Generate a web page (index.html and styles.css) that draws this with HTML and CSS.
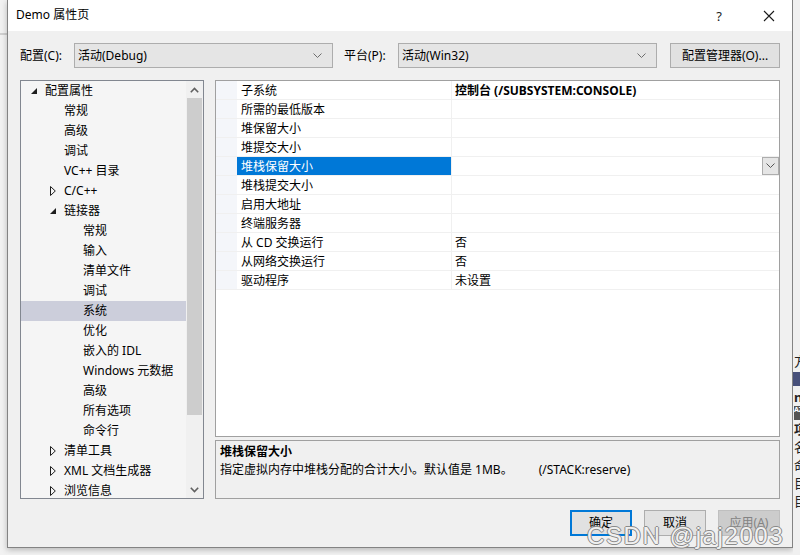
FILE: index.html
```html
<!DOCTYPE html>
<html lang="zh-CN">
<head>
<meta charset="utf-8">
<title>Demo 属性页</title>
<link rel="stylesheet" href="styles.css">
</head>
<body>
<div class="desk">
  <div class="left-gap"><div class="bg-line"></div></div>
  <div class="dialog">
    <div class="titlebar">
      <span class="title">Demo 属性页</span>
      <span class="help">?</span>
      <span class="close"><svg width="12" height="12" viewBox="0 0 12 12"><path d="M1 1 L11 11 M11 1 L1 11" stroke="#1a1a1a" stroke-width="1.1" fill="none"/></svg></span>
    </div>
    <div class="content">
      <div class="toprow">
        <span class="lbl">配置(C):</span>
        <div class="combo"><span>活动(Debug)</span><svg class="chev" width="9" height="6" viewBox="0 0 9 6"><path d="M0.5 0.5 L4.5 4.5 L8.5 0.5" stroke="#6d6d6d" fill="none"/></svg></div>
        <span class="lbl lbl2">平台(P):</span>
        <div class="combo"><span>活动(Win32)</span><svg class="chev" width="9" height="6" viewBox="0 0 9 6"><path d="M0.5 0.5 L4.5 4.5 L8.5 0.5" stroke="#6d6d6d" fill="none"/></svg></div>
        <button class="btn mgr">配置管理器(O)...</button>
      </div>
      <div class="main">
        <div class="tree">
          <div class="tree-list">
            <div class="node l0"><span class="tg"><svg width="6" height="6" viewBox="0 0 6 6"><path d="M6 0 V6 H0 Z" fill="#1e1e1e"/></svg></span>配置属性</div>
            <div class="node l1"><span class="tg"></span>常规</div>
            <div class="node l1"><span class="tg"></span>高级</div>
            <div class="node l1"><span class="tg"></span>调试</div>
            <div class="node l1"><span class="tg"></span>VC++ 目录</div>
            <div class="node l1"><span class="tg"><svg width="6" height="10" viewBox="0 0 6 10"><path d="M0.5 0.5 L5.3 5 L0.5 9.5 Z" fill="none" stroke="#1e1e1e"/></svg></span>C/C++</div>
            <div class="node l1"><span class="tg"><svg width="6" height="6" viewBox="0 0 6 6"><path d="M6 0 V6 H0 Z" fill="#1e1e1e"/></svg></span>链接器</div>
            <div class="node l2"><span class="tg"></span>常规</div>
            <div class="node l2"><span class="tg"></span>输入</div>
            <div class="node l2"><span class="tg"></span>清单文件</div>
            <div class="node l2"><span class="tg"></span>调试</div>
            <div class="node l2 sel"><span class="tg"></span>系统</div>
            <div class="node l2"><span class="tg"></span>优化</div>
            <div class="node l2"><span class="tg"></span>嵌入的 IDL</div>
            <div class="node l2"><span class="tg"></span>Windows 元数据</div>
            <div class="node l2"><span class="tg"></span>高级</div>
            <div class="node l2"><span class="tg"></span>所有选项</div>
            <div class="node l2"><span class="tg"></span>命令行</div>
            <div class="node l1"><span class="tg"><svg width="6" height="10" viewBox="0 0 6 10"><path d="M0.5 0.5 L5.3 5 L0.5 9.5 Z" fill="none" stroke="#1e1e1e"/></svg></span>清单工具</div>
            <div class="node l1"><span class="tg"><svg width="6" height="10" viewBox="0 0 6 10"><path d="M0.5 0.5 L5.3 5 L0.5 9.5 Z" fill="none" stroke="#1e1e1e"/></svg></span>XML 文档生成器</div>
            <div class="node l1"><span class="tg"><svg width="6" height="10" viewBox="0 0 6 10"><path d="M0.5 0.5 L5.3 5 L0.5 9.5 Z" fill="none" stroke="#1e1e1e"/></svg></span>浏览信息</div>
          </div>
          <div class="vscroll">
            <div class="sarrow"><svg width="9" height="6" viewBox="0 0 9 6"><path d="M0.8 5.2 L4.5 1.5 L8.2 5.2" stroke="#606060" stroke-width="1.6" fill="none"/></svg></div>
            <div class="track"><div class="thumb"></div></div>
            <div class="sarrow"><svg width="9" height="6" viewBox="0 0 9 6"><path d="M0.8 0.8 L4.5 4.5 L8.2 0.8" stroke="#606060" stroke-width="1.6" fill="none"/></svg></div>
          </div>
        </div>
        <div class="rightcol">
          <div class="grid">
            <div class="prow"><span class="gut"></span><span class="pname">子系统</span><span class="pval bold">控制台 (/SUBSYSTEM:CONSOLE)</span></div>
            <div class="prow"><span class="gut"></span><span class="pname">所需的最低版本</span><span class="pval"></span></div>
            <div class="prow"><span class="gut"></span><span class="pname">堆保留大小</span><span class="pval"></span></div>
            <div class="prow"><span class="gut"></span><span class="pname">堆提交大小</span><span class="pval"></span></div>
            <div class="prow psel"><span class="gut"></span><span class="pname">堆栈保留大小</span><span class="pval"><span class="ddbtn"><svg width="9" height="6" viewBox="0 0 9 6"><path d="M0.5 0.5 L4.5 4.5 L8.5 0.5" stroke="#555" fill="none"/></svg></span></span></div>
            <div class="prow"><span class="gut"></span><span class="pname">堆栈提交大小</span><span class="pval"></span></div>
            <div class="prow"><span class="gut"></span><span class="pname">启用大地址</span><span class="pval"></span></div>
            <div class="prow"><span class="gut"></span><span class="pname">终端服务器</span><span class="pval"></span></div>
            <div class="prow"><span class="gut"></span><span class="pname">从 CD 交换运行</span><span class="pval">否</span></div>
            <div class="prow"><span class="gut"></span><span class="pname">从网络交换运行</span><span class="pval">否</span></div>
            <div class="prow"><span class="gut"></span><span class="pname">驱动程序</span><span class="pval">未设置</span></div>
          </div>
          <div class="desc">
            <div class="desc-title">堆栈保留大小</div>
            <div class="desc-text">指定虚拟内存中堆栈分配的合计大小。默认值是 1MB。<span class="sw">(/STACK:reserve)</span></div>
          </div>
        </div>
      </div>
      <div class="buttons">
        <button class="btn dlg default">确定</button>
        <button class="btn dlg">取消</button>
        <button class="btn dlg disabled">应用(A)</button>
      </div>
    </div>
  </div>
  <div class="side">
    <div class="s-top"></div>
    <div class="s-glyph">方</div>
    <div class="s-navy"></div>
    <div class="s-glyph s-bold">ne</div>
    <div class="s-az">AZ</div>
    <div class="s-glyph s-bold">项</div>
    <div class="s-glyph">名</div>
    <div class="s-glyph">命</div>
    <div class="s-glyph">目</div>
    <div class="s-glyph">目</div>
  </div>
</div>
<div class="watermark">CSDN @jaj2003</div>
</body>
</html>
```
FILE: styles.css
```css
* { box-sizing: border-box; }
html, body { margin: 0; padding: 0; }
body {
  width: 800px;
  height: 555px;
  overflow: hidden;
  background: #f3f3f3;
  font-family: "Noto Sans", "Noto Sans CJK SC", sans-serif;
  font-size: 12px;
  color: #000;
  position: relative;
}
.desk { display: flex; height: 555px; }
.left-gap { width: 7px; flex: none; background: #f2f2f2; }
.bg-line { margin-top: 33px; height: 2px; background: #d0d0d0; }

.dialog {
  width: 786px;
  height: 548px;
  flex: none;
  background: #f0f0f0;
  border: 1px solid #838383;
  border-top: none;
  box-shadow: 0 2px 6px rgba(0,0,0,0.25);
  display: flex;
  flex-direction: column;
}
.titlebar {
  height: 31px;
  background: #fff;
  display: flex;
  align-items: center;
  padding-left: 8px;
  flex: none;
}
.title { flex: 1; line-height: 16px; padding-bottom: 1px; }
.help { width: 14px; margin-right: 37px; font-size: 13px; color: #1a1a1a; text-align: center; }
.close { width: 12px; height: 12px; margin-right: 17px; display: flex; }

.content { padding: 12px 12px 0 12px; display: flex; flex-direction: column; }

.toprow { display: flex; align-items: center; height: 25px; }
.lbl { width: 54px; flex: none; line-height: 16px; }
.lbl2 { margin-left: 11px; }
.combo {
  width: 259px;
  height: 25px;
  flex: none;
  background: #e5e5e5;
  border: 1px solid #adadad;
  display: flex;
  align-items: center;
  padding: 0 10px 0 3px;
}
.combo span { flex: 1; line-height: 16px; }
.chev { flex: none; }
.btn {
  font-family: inherit;
  font-size: 12px;
  color: #000;
  background: #e1e1e1;
  border: 1px solid #adadad;
  padding: 0;
  line-height: 16px;
}
.mgr { margin-left: auto; width: 110px; height: 25px; }

.main { display: flex; margin-top: 12px; height: 419px; gap: 11px; }
.tree {
  width: 184px;
  flex: none;
  border: 1px solid #828790;
  background: #f5f5f5;
  display: flex;
}
.tree-list { flex: 1; overflow: hidden; }
.node {
  height: 20px;
  display: flex;
  align-items: center;
  white-space: nowrap;
  line-height: 16px;
}
.node.l0 { padding-left: 10px; }
.node.l1 { padding-left: 29px; }
.node.l2 { padding-left: 48px; }
.tg { width: 14px; flex: none; display: flex; align-items: center; }
.node.sel { background: #cccedb; }
.vscroll {
  width: 17px;
  flex: none;
  background: #f0f0f0;
  display: flex;
  flex-direction: column;
}
.sarrow { height: 17px; display: flex; align-items: center; justify-content: center; flex: none; }
.track { flex: 1; padding: 0 1px; }
.thumb { height: 317px; background: #cdcdcd; }

.rightcol { flex: 1; display: flex; flex-direction: column; gap: 3px; }
.grid {
  height: 357px;
  border: 1px solid #a0a0a0;
  background: #fff;
  flex: none;
}
.prow {
  display: flex;
  height: 19px;
  border-bottom: 1px solid #f0f0f0;
}
.gut { width: 21px; flex: none; background: #f4f6fa; }
.pname {
  width: 215px;
  flex: none;
  border-right: 1px solid #f0f0f0;
  padding: 1px 0 0 4px;
  line-height: 17px;
  white-space: nowrap;
}
.pval { flex: 1; padding: 1px 0 0 3px; line-height: 17px; white-space: nowrap; display: flex; justify-content: flex-start; }
.bold { font-weight: bold; }
.psel .pname { background: #0078d7; color: #fff; }
.psel .pval { justify-content: flex-end; padding: 0; }
.ddbtn {
  width: 17px;
  height: 18px;
  background: #e5e5e5;
  border: 1px solid #adadad;
  display: flex;
  align-items: center;
  justify-content: center;
}

.desc {
  flex: 1;
  border: 1px solid #a0a0a0;
  background: #f0f0f0;
  padding: 3px 4px;
}
.desc-title { font-weight: bold; line-height: 16px; }
.desc-text { line-height: 16px; margin-top: 2px; white-space: nowrap; }
.sw { margin-left: 26px; }

.buttons { display: flex; justify-content: flex-end; gap: 12px; margin-top: 11px; }
.dlg { width: 62px; height: 26px; }
.dlg.default { border: 2px solid #0078d7; }
.dlg.disabled { background: #cccccc; border-color: #bfbfbf; color: #838383; }

.side { flex: 1; overflow: hidden; background: #f0f0f0; display: flex; flex-direction: column; }
.s-top { height: 352px; }
.s-glyph { height: 18px; line-height: 18px; font-size: 13px; margin-left: 1px; color: #222; }
.s-bold { font-weight: bold; }
.s-navy { height: 14px; background: #47507a; margin: 2px 0; }
.s-az { height: 14px; background: #555; color: #fff; font-size: 7px; line-height: 7px; font-weight: bold; width: 8px; margin-left: 1px; }

.watermark {
  position: absolute;
  left: 587px;
  top: 522px;
  font-family: "Liberation Sans", sans-serif;
  font-size: 24px;
  letter-spacing: 1.6px;
  color: rgba(255,255,255,0.9);
  text-shadow: 1px 0 0 #8a8a8a, -1px 0 0 #8a8a8a, 0 1px 0 #8a8a8a, 0 -1px 0 #8a8a8a;
  white-space: nowrap;
}
```
